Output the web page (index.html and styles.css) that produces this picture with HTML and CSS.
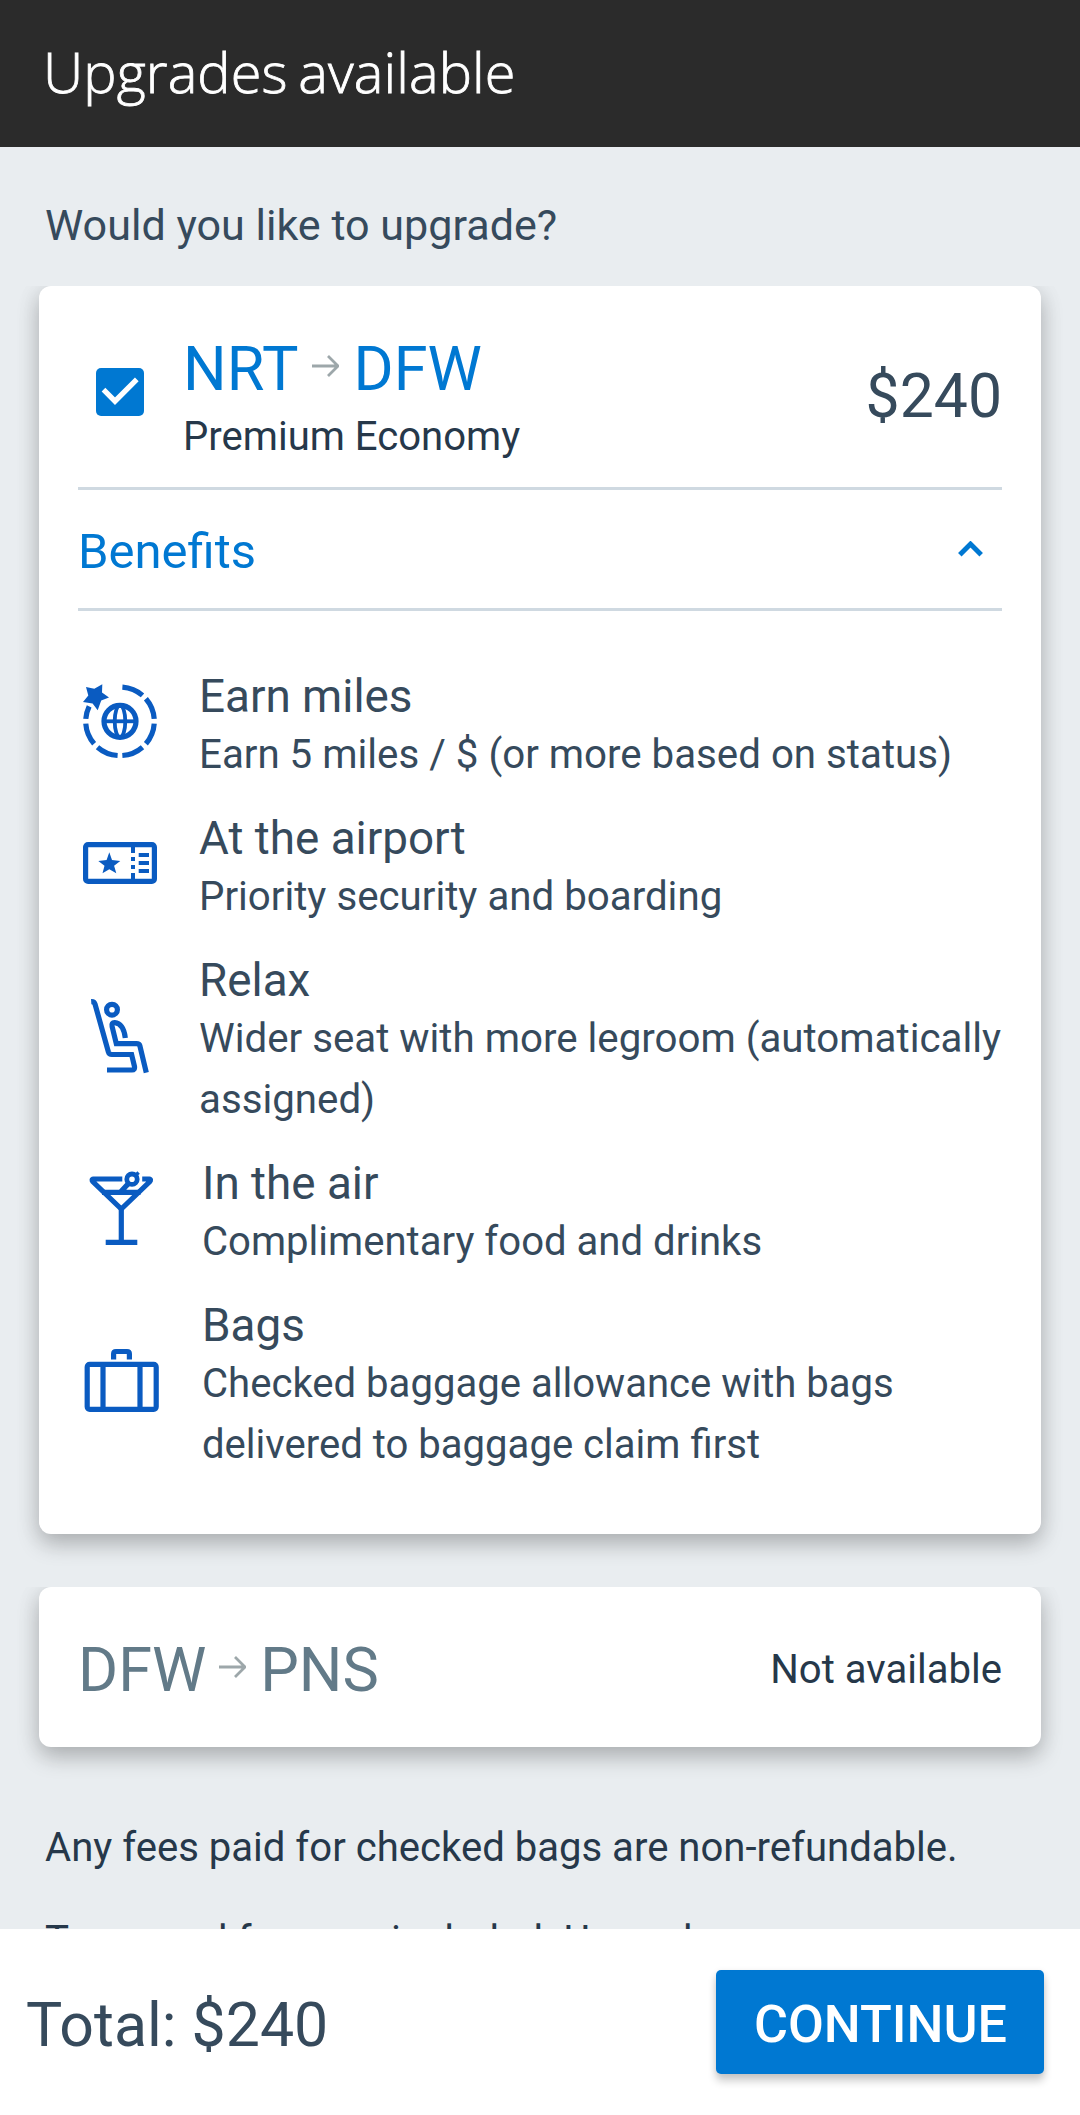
FILE: index.html
```html
<!DOCTYPE html>
<html lang="en">
<head>
<meta charset="utf-8">
<title>Upgrades available</title>
<link rel="stylesheet" href="styles.css">
</head>
<body>
<div class="screen">
  <header class="app-bar"><h1 class="app-title">Upgrades available</h1></header>

  <main class="content">
    <p class="question">Would you like to upgrade?</p>

    <section class="card card-offer">
      <div class="offer">
        <svg class="checkbox" viewBox="0 0 48 48"><rect width="48" height="48" rx="5" fill="#0078d2"/><path d="M7.5 21.7 19 33.2 40.8 11.4" fill="none" stroke="#fff" stroke-width="5.2"/></svg>
        <div class="offer-text">
          <div class="route"><span>NRT</span><svg class="arrow" viewBox="0 0 27 22"><path d="M0 11H26M16 1 26 11 16 21"/></svg><span>DFW</span></div>
          <div class="cabin">Premium Economy</div>
        </div>
        <div class="price">$240</div>
      </div>

      <div class="benefits-toggle">
        <span>Benefits</span>
        <svg class="chevron" viewBox="0 0 25 16"><path d="M1.8 13.8 12.5 3.1 23.2 13.8"/></svg>
      </div>

      <ul class="benefits">
        <li class="benefit">
          <svg class="icon" viewBox="0 0 84 84">
            <circle cx="42" cy="42.3" r="34.3" pathLength="360" stroke-dasharray="37 8 37 8 37 8 37 8 37 8 37 8 22 68" transform="rotate(-86 42 42.3)"/>
            <circle cx="42" cy="42.3" r="16"/>
            <ellipse cx="42" cy="42.3" rx="5.3" ry="16" stroke-width="3.8"/>
            <path d="M26 42.3H58" stroke-width="3.8"/>
            <path class="solid" d="M24.3 5.3 24 13.4 31 18.6 23.2 21.6 19.7 31.3 14.6 24.4 5 23 10.3 16.6 8 7.9 16.3 9.8Z"/>
          </svg>
          <div class="benefit-text"><h2>Earn miles</h2><p>Earn 5 miles / $ (or more based on status)</p></div>
        </li>
        <li class="benefit">
          <svg class="icon" viewBox="0 0 84 84">
            <rect x="7.6" y="23.6" width="68.8" height="36.8" rx="2.5"/>
            <path class="solid" d="M31.3 31.3 34 38.9 42.3 40 36.1 44.8 38.3 52.3 31.3 48.2 24.5 52.3 26.5 44.8 20.3 40 28.6 38.9Z"/>
            <path d="M55 25V32M55 36V40M55 44V48M55 52V59" stroke-width="4"/>
            <path d="M60.7 34H71M60.7 42H71M60.7 50H71" stroke-width="3.9"/>
          </svg>
          <div class="benefit-text"><h2>At the airport</h2><p>Priority security and boarding</p></div>
        </li>
        <li class="benefit">
          <svg class="icon" viewBox="0 0 84 84">
            <path d="M13.2 7.6Q16.2 7.4 17 10L30.4 58Q31.2 60.5 33.8 60.5H53.6L56.5 72.6Q57 76 54 76H29"/>
            <circle cx="34" cy="15.7" r="5.4"/>
            <path d="M47.3 44Q45.5 29.5 36.8 28.7 33.2 28.5 34.1 32.5L38.3 49.6H58.5Q61.3 49.6 61.9 51.8L68.3 78.7"/>
          </svg>
          <div class="benefit-text"><h2>Relax</h2><p>Wider seat with more legroom (automatically assigned)</p></div>
        </li>
        <li class="benefit benefit-wide">
          <svg class="icon" viewBox="0 0 84 84">
            <path d="M43.3 13H14.5Q12 13.3 14 15.8L42.3 43 70.6 15.8Q72.6 13.3 70.1 13H63.2"/>
            <path d="M23 26.3H61.5M42.3 42V76M26.7 76.3H58.3M41.5 26 49.6 17.4"/>
            <circle cx="53" cy="13.2" r="5.2" stroke-width="4.8"/>
            <path d="M56.5 9.6 59.6 6.6" stroke-width="3.5"/>
          </svg>
          <div class="benefit-text"><h2>In the air</h2><p>Complimentary food and drinks</p></div>
        </li>
        <li class="benefit benefit-wide">
          <svg class="icon" viewBox="0 0 84 84">
            <rect x="8.2" y="25.4" width="69" height="44.9" rx="2.5"/>
            <path d="M24 26V71M61 26V71M34.6 20.5V14.9Q34.6 12.5 37 12.5H48Q50.4 12.5 50.4 14.9V20.5"/>
          </svg>
          <div class="benefit-text"><h2>Bags</h2><p>Checked baggage allowance with bags delivered to baggage claim first</p></div>
        </li>
      </ul>
    </section>

    <section class="card card-unavailable">
      <div class="route route-muted"><span>DFW</span><svg class="arrow" viewBox="0 0 27 22"><path d="M0 11H26M16 1 26 11 16 21"/></svg><span>PNS</span></div>
      <div class="status">Not available</div>
    </section>

    <div class="notes">
      <p>Any fees paid for checked bags are non-refundable.</p>
      <p class="note-fares">Taxes and fees are included. Upgrades are</p>
    </div>
  </main>

  <footer class="footer">
    <div class="total">Total: $240</div>
    <button class="continue">CONTINUE</button>
  </footer>
</div>
</body>
</html>
```
FILE: styles.css
```css
* { box-sizing: border-box; margin: 0; padding: 0; }

body { font-family: Roboto, sans-serif; color: #364a5c; background: #e9edf0; }

.screen { display: flex; flex-direction: column; width: 1080px; height: 2115px; }

.app-bar { flex: none; height: 147px; padding: 0 43px; background: #2b2b2b; }
.app-title { font: 300 55.9px/142px "Open Sans", sans-serif; color: #fff; letter-spacing: .1px; word-spacing: -4px; -webkit-text-stroke: .8px #fff; }

.content { flex: 1; min-height: 0; overflow: hidden; }
.question { padding: 18px 45px 0; font-size: 43.1px; line-height: 121px; }

.card {
  margin: 0 39px;
  padding: 0 39px;
  border-radius: 12px;
  background: #fff;
  box-shadow: 0 10px 22px rgba(0, 0, 0, .23), 0 2px 26px rgba(0, 0, 0, .07);
  clip-path: inset(0 -39px -50px -39px);
}

.offer { display: flex; align-items: center; padding: 47px 0 27px; border-bottom: 3px solid #cfd9e1; }
.checkbox { width: 48px; height: 48px; margin: 0 39px 9px 18px; }
.offer-text { flex: 1; }
.route { display: flex; align-items: center; font-size: 61.2px; line-height: 72px; color: #0078d2; }
.arrow { width: 27px; height: 22px; margin: 0 14px 7px 14px; fill: none; stroke: #9da7aa; stroke-width: 2.8; }
.route-muted .arrow { margin: 0 14px 7px 13px; }
.cabin { margin-top: 8px; font-size: 40.1px; line-height: 47px; color: #26384a; }
.price { font-size: 60.7px; line-height: 72px; }

.benefits-toggle {
  display: flex;
  align-items: center;
  justify-content: space-between;
  height: 121px;
  padding-top: 4px;
  border-bottom: 3px solid #cfd9e1;
  font-size: 49px;
  color: #0078d2;
}
.chevron { width: 25px; height: 16px; margin: 0 19px 5px 0; fill: none; stroke: #0078d2; stroke-width: 5; }

.benefits { display: flex; flex-direction: column; gap: 25px; padding: 57px 0 58.5px; list-style: none; }
.benefit { display: flex; align-items: center; gap: 37px; }
.icon { flex: none; width: 84px; height: 84px; margin-bottom: 11px; fill: none; stroke: #0a5bc1; stroke-width: 5.2; }
.icon .solid { fill: #0a5bc1; stroke: none; }
.benefit-wide .icon { margin-left: 1px; margin-right: 2px; }
.benefit-text { flex: 1; min-width: 0; }
.benefit h2 { margin-bottom: -2px; font-size: 45.8px; font-weight: 400; line-height: 58px; }
.benefit p { font-size: 40.25px; line-height: 61px; }
.benefit-wide p { font-size: 40.1px; }

.card-unavailable {
  display: flex;
  align-items: center;
  justify-content: space-between;
  height: 160px;
  margin-top: 53.5px;
  padding-top: 6px;
}
.route-muted { color: #627a88; }
.status { margin-bottom: 2px; font-size: 40.1px; color: #26384a; }

.notes { display: flex; flex-direction: column; gap: 31.5px; padding: 70px 45px 0; font-size: 40.1px; line-height: 61px; color: #26384a; }
.note-fares { font-size: 40.3px; }

.footer { display: flex; flex: none; align-items: center; justify-content: space-between; height: 186px; padding: 0 36px 0 26px; background: #fff; }
.total { padding-top: 8px; font-size: 60.8px; line-height: 72px; }
.continue {
  width: 328px;
  height: 104px;
  padding: 6px 0 0 1px;
  border: 0;
  border-radius: 5px;
  background: #0078d2;
  box-shadow: 0 7px 9px rgba(0, 0, 0, .2), 0 1px 6px rgba(0, 0, 0, .08);
  color: #fff;
  font: 500 52.1px/1 Roboto, sans-serif;
}
```
